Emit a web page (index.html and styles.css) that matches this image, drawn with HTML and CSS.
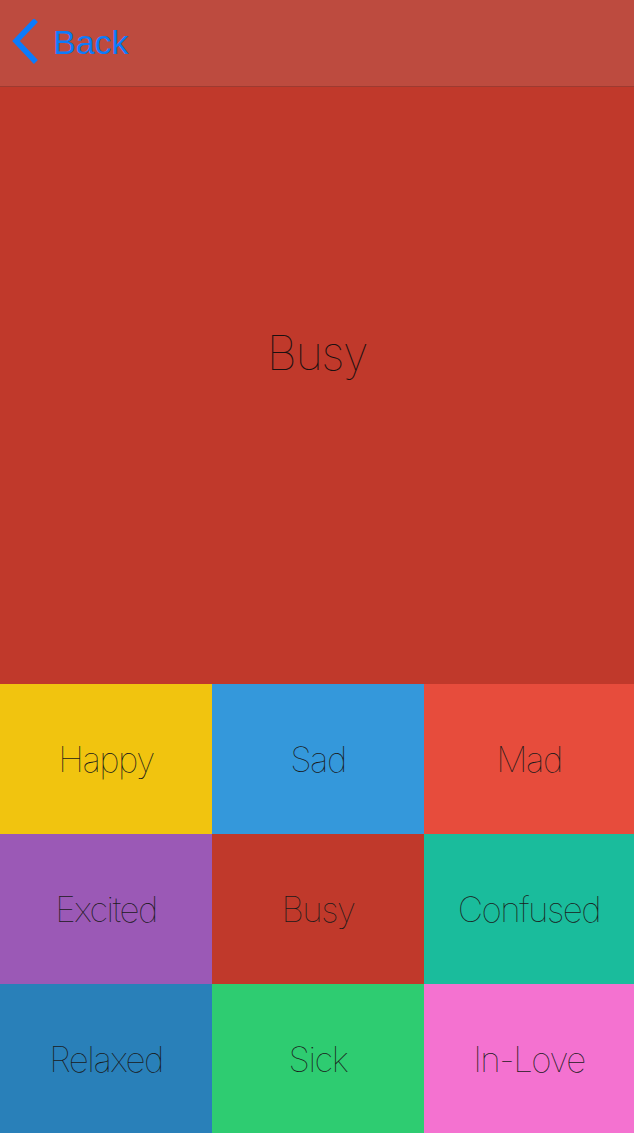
FILE: index.html
```html
<!DOCTYPE html>
<html>
<head>
<meta charset="utf-8">
<link rel="stylesheet" href="styles.css">
</head>
<body>
<div class="screen">
  <header class="nav">
    <a class="back">
      <svg class="chev" width="30" height="46" viewBox="0 0 30 46"><polyline points="23,3 5,22 23,41" fill="none" stroke="#0C7BFB" stroke-width="5.5" stroke-linecap="square"/></svg>
      <span class="back-label">Back</span>
    </a>
  </header>
  <main class="hero"><span class="hero-label">Busy</span></main>
  <section class="grid">
    <div class="cell happy">Happy</div>
    <div class="cell sad">Sad</div>
    <div class="cell mad">Mad</div>
    <div class="cell excited">Excited</div>
    <div class="cell busy">Busy</div>
    <div class="cell confused">Confused</div>
    <div class="cell relaxed">Relaxed</div>
    <div class="cell sick">Sick</div>
    <div class="cell inlove">In-Love</div>
  </section>
</div>
</body>
</html>
```
FILE: styles.css
```css
html, body { margin: 0; padding: 0; }
body { width: 634px; height: 1133px; overflow: hidden; background: #C0392B; }
.screen { display: flex; flex-direction: column; height: 1133px; }
.nav {
  height: 86px;
  background: #BD4B3F;
  border-bottom: 1px solid #9E3A30;
  display: flex;
  align-items: center;
  box-sizing: content-box;
}
.back { display: flex; align-items: center; margin-left: 11px; color: #0C7BFB; }
.chev { display: block; margin-top: -2px; }
.back-label {
  font-family: "Liberation Sans", Arial, sans-serif;
  font-size: 34px;
  margin-left: 12px;
  line-height: 40px;
  margin-top: -3px;
}
.hero {
  height: 597px;
  box-sizing: border-box;
  padding-bottom: 66px;
  background: #C0392B;
  display: flex;
  align-items: center;
  justify-content: center;
}
.hero-label {
  font-family: Inter, "Noto Sans", sans-serif;
  font-weight: 100;
  font-size: 47px;
  color: #1a1010;
  letter-spacing: -1.5px;
}
.grid {
  display: grid;
  grid-template-columns: 212px 212px 210px;
  grid-template-rows: 150px 150px 149px;
}
.cell {
  display: flex;
  align-items: center;
  justify-content: center;
  font-family: Inter, "Noto Sans", sans-serif;
  font-weight: 100;
  font-size: 35px;
  color: #1a1a1a;
  letter-spacing: -1.5px;
}
.happy { background: #F1C40F; }
.sad { background: #3498DB; }
.mad { background: #E74C3C; }
.excited { background: #9B59B6; }
.busy { background: #C0392B; }
.confused { background: #1ABC9C; }
.relaxed { background: #2980B9; }
.sick { background: #2ECC71; }
.inlove { background: #F472D0; }
```
